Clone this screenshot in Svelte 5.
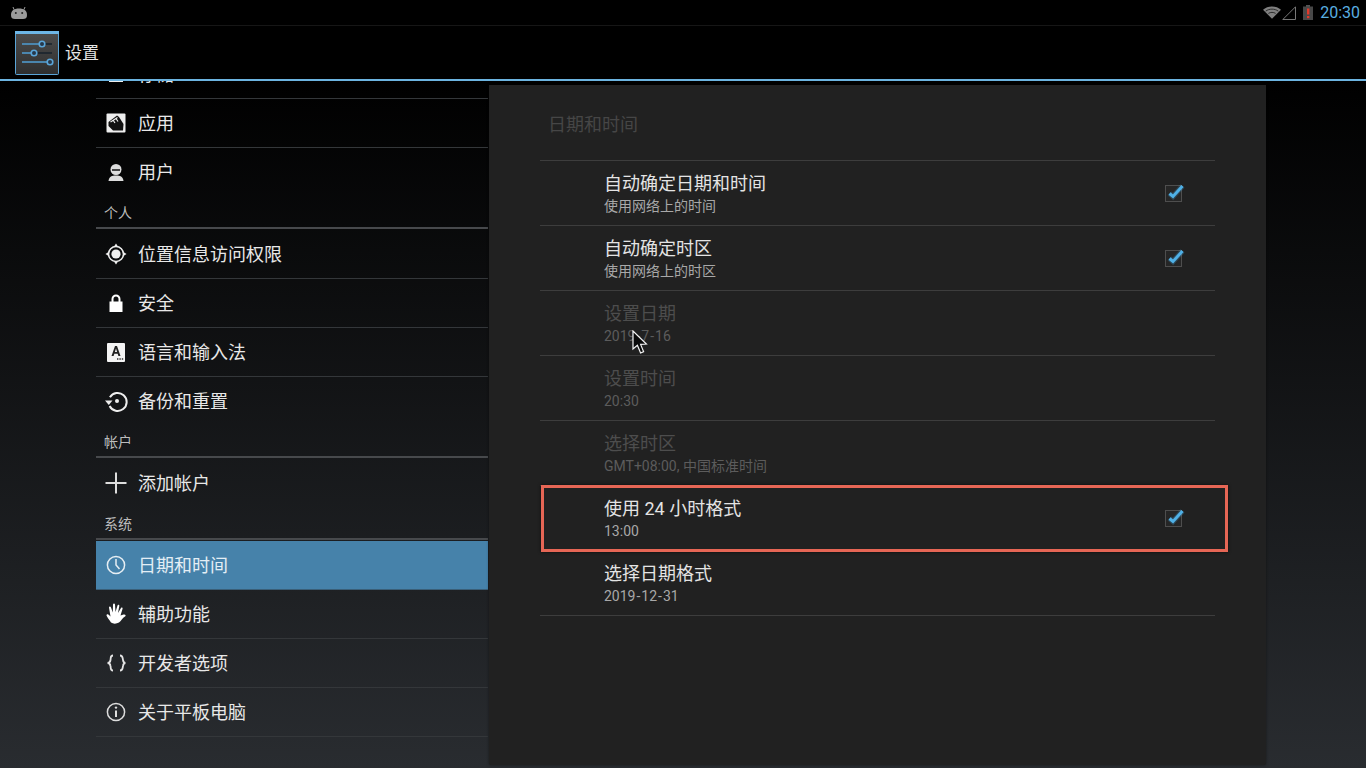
<script>
  const sections = [
    { rows: [
      { label: '存储', icon: 'storage' },
      { label: '应用', icon: 'apps' },
      { label: '用户', icon: 'user', last: true },
    ] },
    { title: '个人', rows: [
      { label: '位置信息访问权限', icon: 'location' },
      { label: '安全', icon: 'lock' },
      { label: '语言和输入法', icon: 'lang' },
      { label: '备份和重置', icon: 'backup', last: true },
    ] },
    { title: '帐户', rows: [{ label: '添加帐户', icon: 'plus', last: true }] },
    { title: '系统', rows: [
      { label: '日期和时间', icon: 'clock', active: true },
      { label: '辅助功能', icon: 'hand' },
      { label: '开发者选项', icon: 'braces' },
      { label: '关于平板电脑', icon: 'info' },
    ] },
  ];

  const prefs = [
    { title: '自动确定日期和时间', sub: '使用网络上的时间', checked: true },
    { title: '自动确定时区', sub: '使用网络上的时区', checked: true },
    { title: '设置日期', sub: '2019-7-16', disabled: true },
    { title: '设置时间', sub: '20:30', disabled: true },
    { title: '选择时区', sub: 'GMT+08:00, 中国标准时间', disabled: true },
    { title: '使用 24 小时格式', sub: '13:00', checked: true, marked: true },
    { title: '选择日期格式', sub: '2019-12-31' },
  ];
</script>

{#snippet icon(name)}
  <svg class="row-icon" viewBox="0 0 24 24" width="24" height="24">
    {#if name === 'storage'}
      <rect x="5" y="4" width="14" height="16" fill="#eee" />
    {:else if name === 'apps'}
      <rect x="2.5" y="2.5" width="19" height="19" rx="1" fill="#eee" />
      <path d="M4.5 11 L13 4.5 L15 6 L19.5 13 L19 19.5 L9 19.5 L4.5 15 Z" fill="#111" />
      <path d="M6.5 11 L13.5 6.5 M9 9 L11 12 M12 7.5 L14 10.5" stroke="#eee" stroke-width="1.2" fill="none" />
    {:else if name === 'user'}
      <circle cx="12" cy="9.5" r="5.5" fill="#ddd" />
      <path d="M8 9 h8 v2 h-8z" fill="#444" />
      <path d="M4.5 21 C5 16.5 8 15.5 12 15.5 C16 15.5 19 16.5 19.5 21 Z" fill="#ddd" />
    {:else if name === 'location'}
      <circle cx="12" cy="12" r="7.5" fill="none" stroke="#eee" stroke-width="1.6" />
      <circle cx="12" cy="12" r="4.6" fill="#eee" />
      <path d="M12 1.5 L14 4.5 H10Z M12 22.5 L14 19.5 H10Z M1.5 12 L4.5 10 V14Z M22.5 12 L19.5 10 V14Z" fill="#eee" />
    {:else if name === 'lock'}
      <rect x="5.5" y="10.5" width="13" height="10.5" fill="#fff" />
      <path d="M8.5 11 V8 a3.5 3.5 0 0 1 7 0 V11" fill="none" stroke="#fff" stroke-width="2" />
    {:else if name === 'lang'}
      <rect x="3" y="3" width="18" height="19" rx="1" fill="#f4f4f4" />
      <path d="M7.5 16 L11 6 H13 L16.5 16 H14.4 L13.7 13.8 H10.3 L9.6 16 Z M10.9 12 H13.1 L12 8.6 Z" fill="#222" />
      <path d="M13 19 h1.4 M15.4 19 h1.4 M17.8 19 h1.4" stroke="#333" stroke-width="1.4" />
    {:else if name === 'backup'}
      <path d="M6.5 7.5 A9 9 0 1 1 5 16" fill="none" stroke="#eee" stroke-width="2" transform="rotate(-8 12 12)" />
      <path d="M1 11.5 H8.5 L4.8 16 Z" fill="#eee" />
      <circle cx="13" cy="12" r="2" fill="#eee" />
    {:else if name === 'plus'}
      <path d="M12 1.5 V22.5 M1.5 12 H22.5" stroke="#ddd" stroke-width="2" />
    {:else if name === 'clock'}
      <circle cx="12" cy="12" r="8.6" fill="none" stroke="#e6eef3" stroke-width="1.5" />
      <path d="M12 6 V12 L15.5 16" fill="none" stroke="#e6eef3" stroke-width="1.5" />
    {:else if name === 'hand'}
      <path d="M7 20.5 C5 17.5 3 15 2.5 13.5 C2.5 12 4 12 5 13 L6.5 14.5 L5 5.5 C5 4 6.6 4 7 5.5 L8.8 10.5 L9 2.5 C9.2 1 10.8 1 11 2.5 L11.5 10 L13.5 3.5 C14 2.2 15.5 2.5 15.3 4 L14 11 L17 6 C17.8 5 19 5.7 18.5 7 L16.5 13.5 L19.5 12.5 C21.5 12 22.3 13.5 21 14.5 C18.5 16 17 19 15 20.5 C12.5 22 9 22 7 20.5 Z" fill="#fff" />
    {:else if name === 'braces'}
      <path d="M9 4.5 C6 4.5 7 7 6.5 9 C6.2 11 5 12 3.5 12 C5 12 6.2 13 6.5 15 C7 17 6 19.5 9 19.5 M16 4.5 C19 4.5 18.5 7 19 9 C19.3 11 20 12 21.5 12 C20 12 19.3 13 19 15 C18.5 17 19 19.5 16 19.5" fill="none" stroke="#e4e4e4" stroke-width="1.8" />
    {:else if name === 'info'}
      <circle cx="12" cy="12" r="8.6" fill="none" stroke="#ddd" stroke-width="1.5" />
      <path d="M12 10.5 V17" stroke="#ddd" stroke-width="2" />
      <circle cx="12" cy="7.6" r="1.2" fill="#ddd" />
    {/if}
  </svg>
{/snippet}

<div class="screen">
  <header class="status-bar">
    <svg class="droid" viewBox="0 0 18 14" width="18" height="14">
      <path d="M1 9 C1 4.5 4 2.5 9 2.5 C14 2.5 17 4.5 17 9 C17 12 15.5 13 13 13 H5 C2.5 13 1 12 1 9 Z" fill="#9a9a9a" />
      <path d="M4 3.5 L3 1 M14 3.5 L15 1" stroke="#9a9a9a" stroke-width="1" />
      <circle cx="5.8" cy="7" r="1" fill="#222" />
      <circle cx="12.2" cy="7" r="1" fill="#222" />
    </svg>
    <div class="status-right">
      <svg viewBox="0 0 20 14" width="18" height="13">
        <path d="M0 4 C5 -1 15 -1 20 4 L10 14 Z" fill="#808080" />
        <path d="M3 5.5 C7 2.5 13 2.5 17 5.5 M6 8 C8.5 6.5 11.5 6.5 14 8" fill="none" stroke="#222" stroke-width="1" />
      </svg>
      <svg viewBox="0 0 14 14" width="14" height="14">
        <path d="M13.5 0.8 V13.5 H0.8 Z" fill="none" stroke="#777" stroke-width="1" />
      </svg>
      <svg class="battery" viewBox="0 0 10 15" width="10" height="15">
        <rect x="3" y="0" width="4" height="2" fill="#555" />
        <rect x="0" y="1.5" width="10" height="13.5" fill="#484848" />
        <rect x="4" y="3.5" width="2.4" height="6" fill="#e0392b" />
        <rect x="4" y="11" width="2.4" height="2.2" fill="#e0392b" />
      </svg>
      <span class="clock">20:30</span>
    </div>
  </header>

  <div class="action-bar">
    <svg class="app-icon" viewBox="0 0 44 44" width="44" height="44">
      <defs>
        <linearGradient id="tile" x1="0" y1="0" x2="0" y2="1">
          <stop offset="0" stop-color="#4e4e4e" />
          <stop offset="1" stop-color="#2e2e2e" />
        </linearGradient>
      </defs>
      <rect x="0.5" y="0.5" width="43" height="43" rx="1" fill="url(#tile)" stroke="#5aa5d8" />
      <rect x="0" y="0" width="44" height="3" fill="#6db6e6" />
      <path d="M7 13 H37 M7 22 H37 M7 31 H37" stroke="#17222c" stroke-width="1.4" />
      <path d="M7 13 H27 M7 22 H19 M7 31 H35" stroke="#5aa5d8" stroke-width="1.4" />
      <g fill="#26384a" stroke="#5aa5d8" stroke-width="1.6">
        <circle cx="27" cy="13" r="2.8" />
        <circle cx="19" cy="22" r="2.8" />
        <circle cx="35" cy="31" r="2.8" />
      </g>
    </svg>
    <span class="app-title">设置</span>
  </div>

  <main class="content">
    <nav class="side-list">
      <div class="side-scroll">
        {#each sections as section}
          {#if section.title}
            <div class="side-header">{section.title}</div>
          {/if}
          {#each section.rows as row}
            <div class="side-row" class:active={row.active} class:last={row.last}>
              {@render icon(row.icon)}
              <span>{row.label}</span>
            </div>
          {/each}
        {/each}
      </div>
    </nav>

    <section class="panel">
      <h2 class="panel-title">日期和时间</h2>
      <ul class="pref-list">
        {#each prefs as pref}
          <li class="pref" class:disabled={pref.disabled} class:marked={pref.marked}>
            <div class="pref-text">
              <div class="pref-title">{pref.title}</div>
              <div class="pref-sub">{#each pref.sub.split('-') as part, i}{#if i}<span class="dash">-</span>{/if}{part}{/each}</div>
            </div>
            {#if pref.checked}
              <svg class="check" viewBox="0 0 24 24" width="24" height="24">
                <rect x="3.5" y="4.5" width="16" height="16" fill="#262626" stroke="#4e4e4e" />
                <path d="M7.5 12.5 L11 15.5 L20.5 5" fill="none" stroke="#43a5dc" stroke-width="5.5" opacity="0.25" />
                <path d="M7.5 12.5 L11 15.5 L20.5 5" fill="none" stroke="#4fb0e6" stroke-width="3" />
              </svg>
            {/if}
          </li>
        {/each}
      </ul>
    </section>
  </main>

  <svg class="cursor" viewBox="0 0 16 26" width="16" height="26">
    <path d="M1 1 V19 L5.4 15.2 L8.6 23 L11.6 21.6 L8.6 14.4 L14.4 14 Z" fill="#0a0a0a" stroke="#f4f4f4" stroke-width="1.2" />
  </svg>
</div>

<style>
  :global(body) {
    margin: 0;
    background: #000;
  }

  .screen {
    position: relative;
    width: 1366px;
    height: 768px;
    overflow: hidden;
    display: flex;
    flex-direction: column;
    font-family: Roboto, "Noto Sans CJK SC", sans-serif;
    color: #e8e8e8;
    background: linear-gradient(#000 80px, #292c30 768px);
  }

  .status-bar {
    height: 25px;
    flex: none;
    display: flex;
    align-items: center;
    justify-content: space-between;
    padding: 0 6px 0 10px;
    background: #000;
    border-bottom: 1px solid #161616;
  }

  .status-right {
    display: flex;
    align-items: center;
    gap: 1px;
  }

  .battery {
    margin: 0 6px;
  }

  .clock {
    font-size: 16px;
    color: #5aaee0;
  }

  .action-bar {
    height: 53px;
    flex: none;
    display: flex;
    align-items: center;
    padding-left: 15px;
    gap: 6px;
    background: #000;
    border-bottom: 2px solid #6cb4e0;
  }

  .app-title {
    font-size: 17px;
    color: #e4e4e4;
    padding-bottom: 2px;
  }

  .content {
    flex: 1;
    min-height: 0;
    display: flex;
    padding-left: 96px;
  }

  .side-list {
    width: 392px;
    flex: none;
    overflow: hidden;
  }

  .side-scroll {
    margin-top: -31px;
  }

  .side-row {
    height: 48px;
    display: flex;
    align-items: center;
    gap: 10px;
    padding-left: 8px;
    font-size: 18px;
    border-bottom: 1px solid #34373a;
  }

  .side-row span {
    padding-bottom: 3px;
  }

  .side-row.last {
    border-bottom: none;
  }

  .side-row.active {
    background: #4682aa;
    color: #e3eef5;
    border-bottom-color: #3a5f78;
  }

  .row-icon {
    flex: none;
  }

  .side-header {
    height: 28px;
    padding: 2px 0 1px 8px;
    margin-bottom: 1px;
    display: flex;
    align-items: center;
    font-size: 14px;
    color: #bdbdbd;
    border-bottom: 2px solid #47494c;
  }

  .panel {
    width: 777px;
    height: 680px;
    margin: 4px 0 0 1px;
    flex: none;
    padding: 0 51px;
    box-sizing: border-box;
    background: #212121;
    border-radius: 0 0 2px 2px;
    box-shadow: 0 0 3px rgba(0, 0, 0, 0.45);
  }

  .panel-title {
    height: 76px;
    margin: 0;
    padding: 28px 0 0 8px;
    box-sizing: border-box;
    font-size: 18px;
    line-height: 24px;
    font-weight: 400;
    color: #464646;
    border-bottom: 1px solid #3d3d3d;
  }

  .pref-list {
    width: 675px;
    margin: 0;
    padding: 0;
    list-style: none;
  }

  .pref {
    position: relative;
    height: 64px;
    display: flex;
    align-items: flex-start;
    justify-content: space-between;
    padding: 0 29px 0 64px;
    border-bottom: 1px solid #3d3d3d;
  }

  .pref.marked {
    border-bottom: none;
    height: 65px;
  }

  .pref.marked::after {
    content: "";
    position: absolute;
    inset: -1px -13px -1px 1px;
    border: 3px solid #e66655;
    box-shadow: 0 0 3px rgba(0, 0, 0, 0.7);
  }

  .pref-text {
    margin-top: 11px;
  }

  .check {
    margin-top: 20px;
  }

  .pref-title {
    font-size: 18px;
    line-height: 24px;
    color: #e4e4e4;
  }

  .pref-sub {
    font-size: 14px;
    line-height: 20px;
    color: #a8a8a8;
  }

  .dash {
    margin: 0 1px;
  }

  .pref.disabled .pref-title {
    color: #4d4d4d;
  }

  .pref.disabled .pref-sub {
    color: #5c5c5c;
  }

  .cursor {
    position: absolute;
    left: 632px;
    top: 330px;
  }
</style>
